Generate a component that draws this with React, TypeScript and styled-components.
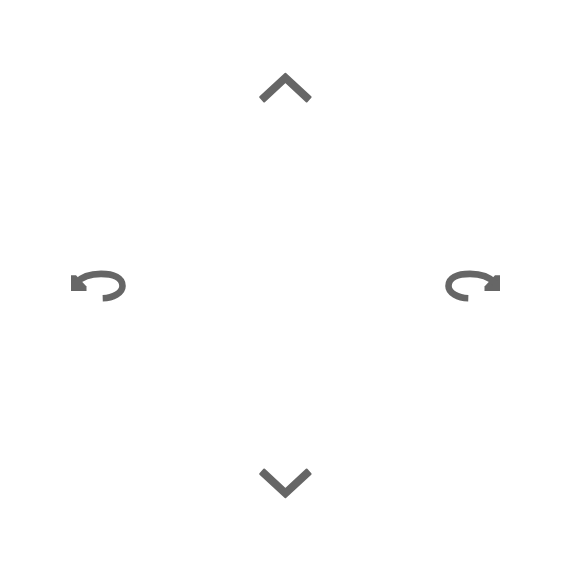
import React from "react";
import styled, { createGlobalStyle } from "styled-components";

const GlobalStyle = createGlobalStyle`
  html, body {
    margin: 0;
    padding: 0;
    background: #ffffff;
  }
`;

const Pad = styled.div`
  box-sizing: border-box;
  width: 570px;
  height: 570px;
  padding: 70px 69px 69px 70px;
  display: grid;
  grid-template-columns: 1fr 1fr;
  grid-template-rows: auto 1fr auto;
  background: #ffffff;
`;

const Control = styled.button<{ $area: "up" | "left" | "right" | "down" }>`
  all: unset;
  display: block;
  line-height: 0;
  cursor: pointer;
  grid-column: ${(p) =>
    p.$area === "left" ? "1" : p.$area === "right" ? "2" : "1 / span 2"};
  grid-row: ${(p) =>
    p.$area === "up" ? "1" : p.$area === "down" ? "3" : "2"};
  justify-self: ${(p) =>
    p.$area === "left" ? "start" : p.$area === "right" ? "end" : "center"};
  align-self: center;
`;

const Icon = styled.svg<{ $flip?: "x" | "y" }>`
  display: block;
  fill: none;
  overflow: visible;
  color: #666666;
  transform: ${(p) =>
    p.$flip === "x" ? "scaleX(-1)" : p.$flip === "y" ? "scaleY(-1)" : "none"};
`;

const Chevron = ({ flip }: { flip?: "y" }) => (
  <Icon $flip={flip} width="57" height="32" viewBox="0 0 57 32">
    <path
      d="M28.4 3.7 L53.6 27.1 L49.6 31.5 L28.4 11.86 L7.2 31.5 L3.2 27.1 Z"
      fill="currentColor"
      stroke="currentColor"
      strokeWidth="2"
      strokeLinejoin="round"
    />
  </Icon>
);

const Rotate = ({ flip }: { flip?: "x" }) => (
  <Icon $flip={flip} width="57" height="32" viewBox="0 0 57 32">
    <path d="M1 5.3 H6 L16.5 16.5 V21 H1 Z" fill="currentColor" />
    <path
      d="M6 13 C11 7.5 20 3.9 31 3.9 C44 3.9 52.5 8 52.5 16 C52.5 23 43 28 32.7 28.3"
      stroke="currentColor"
      strokeWidth="6.6"
    />
  </Icon>
);

export default function App() {
  return (
    <>
      <GlobalStyle />
      <Pad>
        <Control $area="up" aria-label="Up">
          <Chevron />
        </Control>
        <Control $area="left" aria-label="Rotate left">
          <Rotate />
        </Control>
        <Control $area="right" aria-label="Rotate right">
          <Rotate flip="x" />
        </Control>
        <Control $area="down" aria-label="Down">
          <Chevron flip="y" />
        </Control>
      </Pad>
    </>
  );
}
